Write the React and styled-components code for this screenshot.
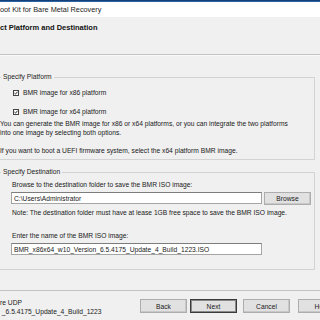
import React from 'react';
import styled, { createGlobalStyle } from 'styled-components';

const GlobalStyle = createGlobalStyle`
  html, body {
    margin: 0;
    padding: 0;
    background: #f0f0f0;
    overflow: hidden;
  }
  body {
    font-family: "Liberation Sans", Arial, sans-serif;
    font-size: 6.7px;
    color: #202020;
  }
`;

const Dialog = styled.div`
  width: 320px;
  height: 320px;
  display: flex;
  flex-direction: column;
  background: #f0f0f0;
  overflow: hidden;
`;

const Caption = styled.div`
  height: 2px;
  flex-shrink: 0;
  background: linear-gradient(#0b2f5e, #3474bd);
`;

const TitleBar = styled.div`
  height: 15px;
  flex-shrink: 0;
  display: flex;
  align-items: center;
  background: #fff;
  font-size: 7.3px;
  color: #222;
`;

const Header = styled.div`
  height: 38px;
  flex-shrink: 0;
  box-sizing: border-box;
  padding-top: 6px;
  line-height: 9px;
  font-weight: bold;
  font-size: 7.5px;
  color: #111;
  border-bottom: 1px solid #c2c2c2;
  box-shadow: 0 1px 0 #fafafa;
`;

const Group = styled.fieldset`
  margin: ${p => p.top}px 5px 0 -6px;
  padding: 0 0 ${p => p.bottom}px 5px;
  min-width: 0;
  border: 1px solid #d3d3d3;
  line-height: 9px;
`;

const Legend = styled.legend`
  margin-left: 1px;
  padding: 0 2px;
  line-height: 8px;
  color: #222;
`;

const CheckRow = styled.label`
  display: flex;
  align-items: center;
  gap: 4px;
  height: 9px;
  padding-left: 13px;
  margin-top: ${p => p.top}px;
`;

const Box = styled.span`
  width: 6px;
  height: 6px;
  display: flex;
  background: #fff;
  box-sizing: border-box;
  border: 1px solid #444;
`;

const Text = styled.div`
  margin-top: ${p => p.top || 0}px;
  padding-left: ${p => p.indent || 0}px;
`;

const FieldRow = styled.div`
  display: flex;
  align-items: flex-start;
  gap: 2px;
  padding-left: 11px;
  margin-top: 3px;
`;

const Input = styled.div`
  width: 251px;
  height: 12px;
  box-sizing: border-box;
  display: flex;
  align-items: center;
  padding-left: 2px;
  background: #fff;
  border: 1px solid #a5a5a5;
  border-top-color: #7d7d7d;
  white-space: nowrap;
  overflow: hidden;
`;

const Button = styled.button`
  width: 47px;
  height: ${p => p.h || 14}px;
  flex-shrink: 0;
  padding: 0;
  font-family: inherit;
  font-size: 6.7px;
  color: #202020;
  background: #e1e1e1;
  border: 1px solid ${p => (p.primary ? '#3a3a3a' : '#adadad')};
  box-shadow: ${p => (p.primary ? 'inset 0 0 0 1px #8a8a8a' : 'inset -1px -1px 0 #c8c8c8')};
`;

const Footer = styled.div`
  margin-top: 20px;
  border-top: 1px solid #c2c2c2;
  display: flex;
  line-height: 9px;
`;

const Info = styled.div`
  width: 140px;
  flex-shrink: 0;
  padding-top: 7px;
  white-space: nowrap;
`;

const Buttons = styled.div`
  display: flex;
  flex-shrink: 0;
  margin-top: 8px;
`;

const Gap = styled.span`
  width: ${p => p.w}px;
  flex-shrink: 0;
`;

function Check({ children, top }) {
  return (
    <CheckRow top={top}>
      <Box>
        <svg width="4" height="4" viewBox="0 0 4 4">
          <path d="M0.4 2 L1.5 3.1 L3.6 0.7" fill="none" stroke="#111" strokeWidth="0.9" />
        </svg>
      </Box>
      {children}
    </CheckRow>
  );
}

export default function App() {
  return (
    <Dialog>
      <GlobalStyle />
      <Caption />
      <TitleBar>oot Kit for Bare Metal Recovery</TitleBar>
      <Header>ct Platform and Destination</Header>

      <Group top={18} bottom={4}>
        <Legend>Specify Platform</Legend>
        <Check top={7}>BMR image for x86 platform</Check>
        <Check top={10}>BMR image for x64 platform</Check>
        <Text top={3}>
          You can generate the BMR image for x86 or x64 platforms, or you can integrate the two platforms
          <br />
          into one image by selecting both options.
        </Text>
        <Text top={9}>If you want to boot a UEFI firmware system, select the x64 platform BMR image.</Text>
      </Group>

      <Group top={8} bottom={14}>
        <Legend>Specify Destination</Legend>
        <Text top={4} indent={12}>Browse to the destination folder to save the BMR ISO image:</Text>
        <FieldRow>
          <Input>C:\Users\Administrator</Input>
          <Button h={13}>Browse</Button>
        </FieldRow>
        <Text top={3} indent={12}>Note: The destination folder must have at lease 1GB free space to save the BMR ISO image.</Text>
        <Text top={14} indent={12}>Enter the name of the BMR ISO image:</Text>
        <FieldRow>
          <Input>BMR_x86x64_w10_Version_6.5.4175_Update_4_Build_1223.ISO</Input>
        </FieldRow>
      </Group>

      <Footer>
        <Info>
          re UDP
          <br />
          &nbsp;_6.5.4175_Update_4_Build_1223
        </Info>
        <Buttons>
          <Button>Back</Button>
          <Gap w={3} />
          <Button primary>Next</Button>
          <Gap w={6} />
          <Button>Cancel</Button>
          <Gap w={8} />
          <Button>Help</Button>
        </Buttons>
      </Footer>
    </Dialog>
  );
}
